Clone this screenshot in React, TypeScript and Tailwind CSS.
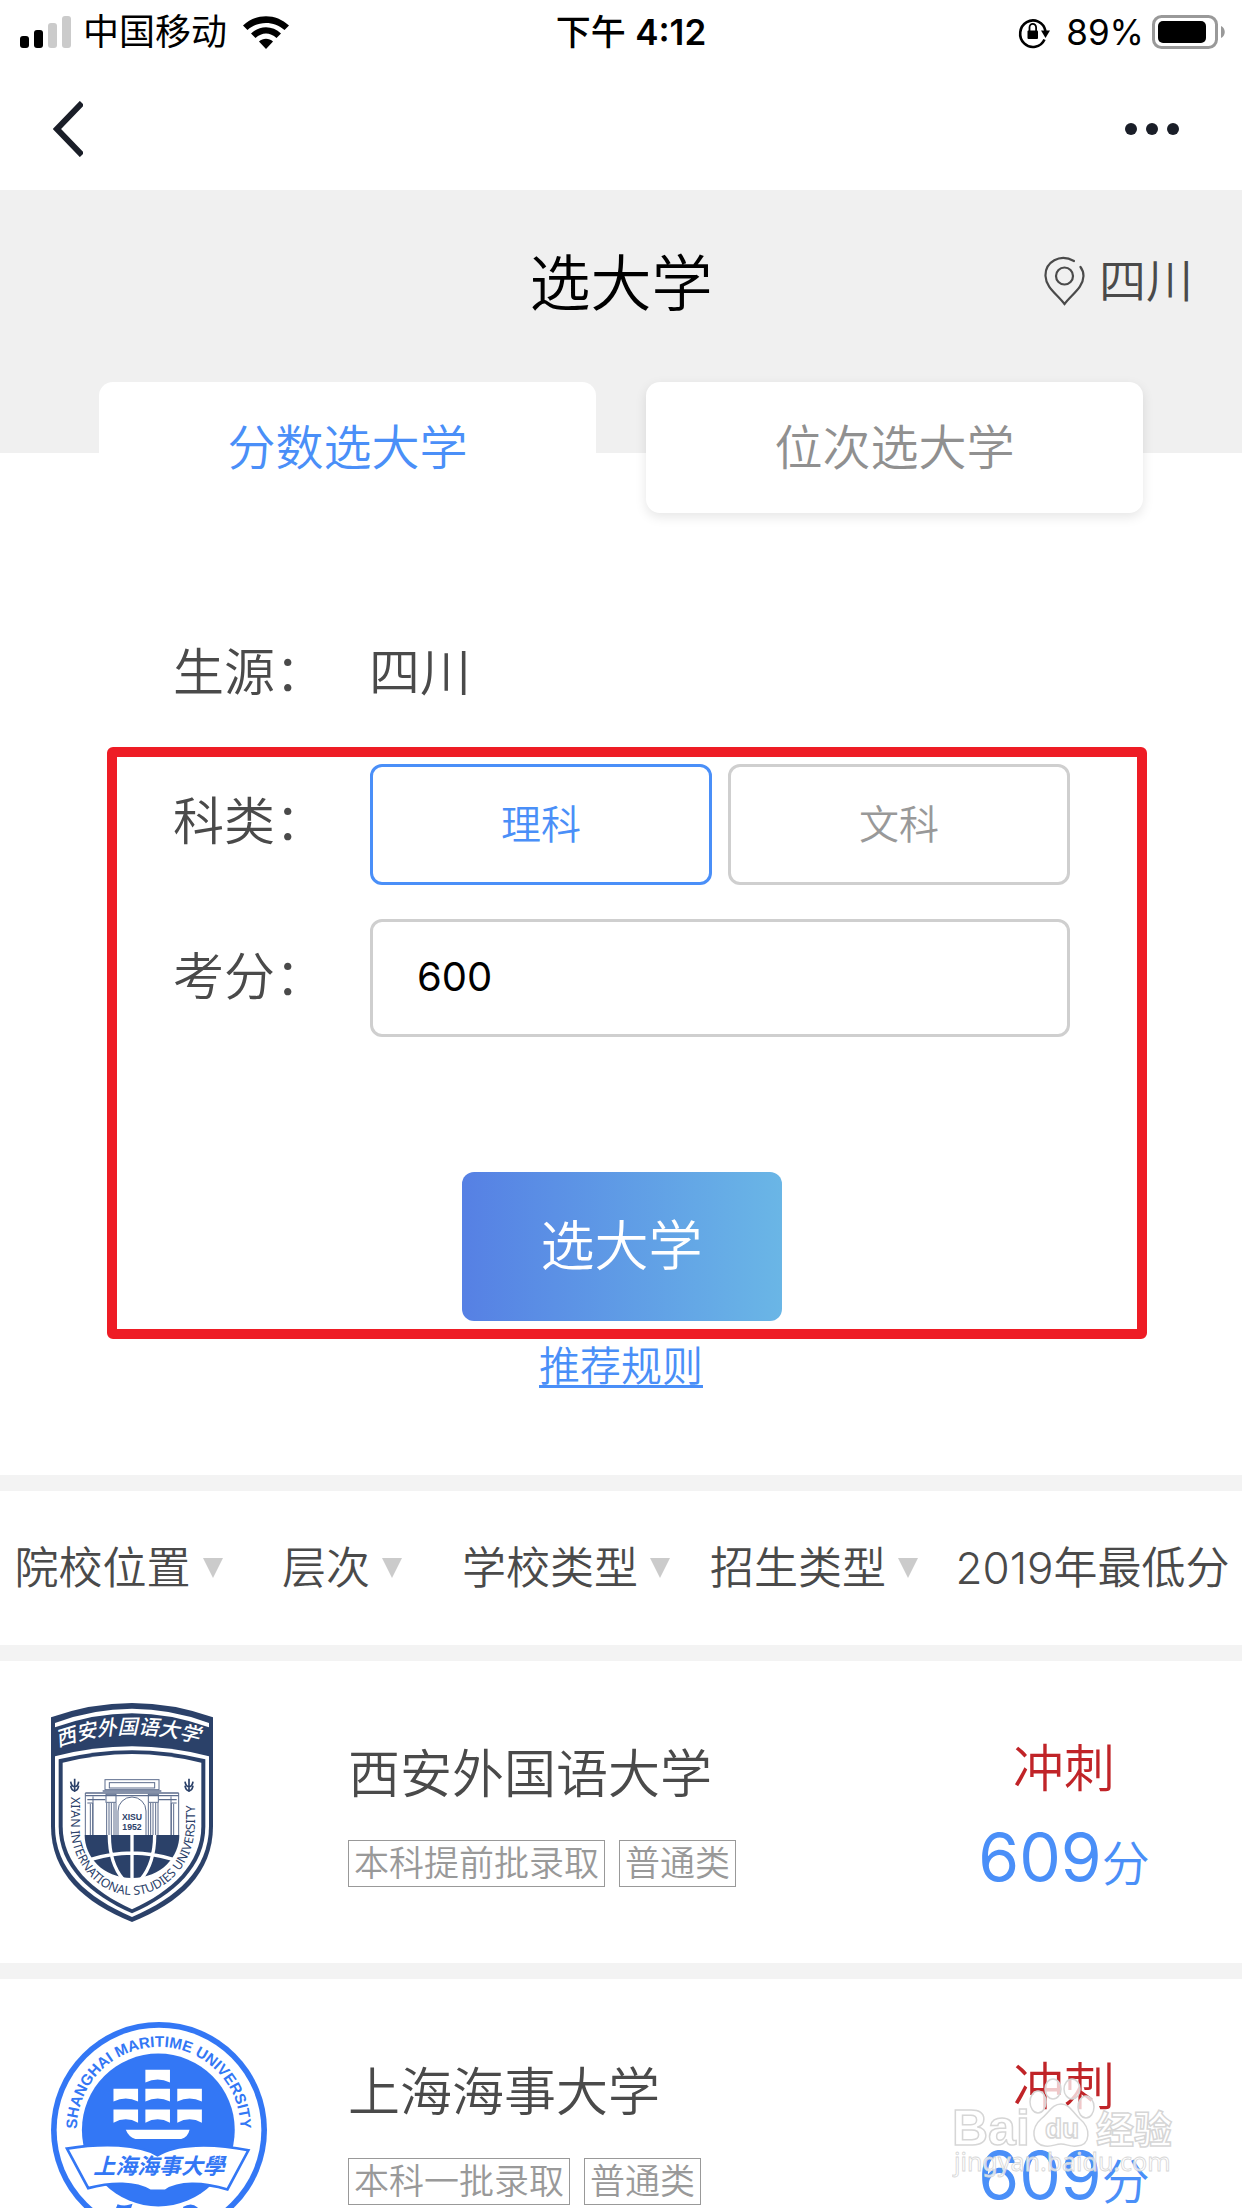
import { useState } from "react";

const filters = ["院校位置", "层次", "学校类型", "招生类型"];

const schools = [
    { name: "西安外国语大学", tags: ["本科提前批录取", "普通类"], level: "冲刺", score: 609, Logo: XisuLogo },
    { name: "上海海事大学", tags: ["本科一批录取", "普通类"], level: "冲刺", score: 609, Logo: SmuLogo },
];

function StatusBar() {
    return (
        <div className="grid h-16 grid-cols-3 items-center pl-5 pr-4 text-black">
            <div className="flex items-center">
                <svg className="h-8 w-[51px]" viewBox="0 0 51 32">
                    <rect x="0" y="20" width="9" height="12" rx="3" />
                    <rect x="14" y="14" width="9" height="18" rx="3" />
                    <rect x="28" y="7" width="9" height="25" rx="3" fill="#cbcbcb" />
                    <rect x="42" y="0" width="9" height="32" rx="3" fill="#cbcbcb" />
                </svg>
                <span className="ml-3 text-[36px] font-normal leading-[60px]">中国移动</span>
                <svg className="ml-4 h-[33px] w-[46px]" viewBox="0 0 46 33">
                    <path d="M0 9.5C13-3 33-3 46 9.5L41.500 14C31 4.500 15 4.500 4.500 14Z" />
                    <path d="M8 17.500C16.500 9 29.500 9 38 17.500L33.500 22C27 16 19 16 12.500 22Z" />
                    <path d="M16 25.500C20 21.800 26 21.800 30 25.500L23 33Z" />
                </svg>
            </div>
            <p className="pl-4 text-center text-[35px] font-medium leading-[60px]">下午 <span className="font-semibold">4:12</span></p>
            <div className="flex items-center justify-end">
                <svg className="h-9 w-8" viewBox="0 0 32 36" fill="none" stroke="#000" strokeWidth="2.600">
                    <path d="M26.500 25.500A12.800 13.300 0 1 1 27.500 17" />
                    <path d="M23 16.500h9L27.500 24Z" fill="#000" stroke="none" />
                    <rect x="9.500" y="16.500" width="10.500" height="8.500" rx="1" fill="#000" stroke="none" />
                    <path d="M11.500 17v-3.500a3.300 3.600 0 0 1 6.600 0V17" strokeWidth="1.800" />
                </svg>
                <span className="ml-4 text-[35px] font-normal leading-[60px]">89%</span>
                <svg className="ml-2 h-[34px] w-[74px]" viewBox="0 0 74 34">
                    <rect x="1.500" y="1.500" width="63" height="31" rx="8" fill="none" stroke="#999" strokeWidth="3" />
                    <rect x="6" y="6" width="48" height="22" rx="5" />
                    <path d="M69 11c5 2 5 10 0 12Z" fill="#999" />
                </svg>
            </div>
        </div>
    );
}

function XisuLogo() {
    return (
        <svg className="h-[219px] w-[162px]" viewBox="63 60 486 657" role="img" aria-label="西安外国语大学">
            <path d="M63 103Q306 17 549 103V430C549 570 450 660 306 717C162 660 63 570 63 430Z" fill="#2b4169" />
            <path d="M75 120Q306 35 537 120V133Q306 48 75 133Z" fill="#fff" />
            <path d="M75 220Q306 160 537 220V430C537 560 440 645 306 702C172 645 75 560 75 430Z" fill="#fff" />
            <path d="M86 229Q306 174 526 229V430C526 550 432 636 306 691C180 636 86 550 86 430Z" fill="#2b4169" />
            <path d="M98 239Q306 187 514 239V430C514 543 425 625 306 679C187 625 98 543 98 430Z" fill="#fff" />

            <path id="xisu-name" d="M84 192Q306 114 534 190" fill="none" />
            <text className="font-['Noto_Sans_CJK_SC',sans-serif] font-medium italic" fill="#fff" fontSize="61">
                <textPath href="#xisu-name">西安外国语大学</textPath>
            </text>

            {/* gate */}
            <g fill="none" stroke="#5d6d8d" strokeWidth="3">
                <rect x="225" y="290" width="162" height="30" />
                <rect x="238" y="299" width="136" height="16" />
                <path d="M218 324h176M166 330h280M166 338h280M172 350h54M386 350h54" strokeWidth="4" />
                <rect x="228" y="334" width="30" height="24" />
                <rect x="355" y="334" width="30" height="24" />
                <path d="M166 330v126M172 360h16v96M181 362v94M189 340v116M446 330v126M440 360h-16v96M431 362v94M423 340v116" />
                <path d="M230 360v96M237 360v96M244 360v96M252 360v96M258 360v96M355 360v96M362 360v96M369 360v96M377 360v96M384 360v96" />
                <path d="M264 456V384a42 42 0 0 1 84 0v72" />
            </g>
            <g className="font-['Liberation_Sans',sans-serif]" fill="#2b4169" fontWeight="bold" fontSize="26" textAnchor="middle">
                <text x="306" y="411">XISU</text>
                <text x="306" y="440">1952</text>
            </g>

            {/* globe */}
            <path d="M164 456H448C448 520 395 585 306 585C217 585 164 520 164 456Z" fill="#2b4169" />
            <path d="M306 456V590M238 456C238 505 246 550 280 590M374 456C374 505 366 550 332 590M180 530Q306 490 432 530" fill="none" stroke="#fff" strokeWidth="10" />

            {/* wheat ears */}
            <path d="M134 287v40M122 296q2 14 12 16q10-2 12-16M122 308q2 14 12 16q10-2 12-16M477 287v40M465 296q2 14 12 16q10-2 12-16M465 308q2 14 12 16q10-2 12-16" fill="none" stroke="#2b4169" strokeWidth="5" />

            <path id="xisu-ring" d="M122 342V430C122 540 205 636 306 636C407 636 494 540 494 430V325" fill="none" />
            <text className="font-['Noto_Sans',sans-serif] font-normal" fill="#2b4169" fontSize="37">
                <textPath href="#xisu-ring">XI'AN INTERNATIONAL STUDIES UNIVERSITY</textPath>
            </text>
        </svg>
    );
}

function SmuLogo() {
    return (
        <svg className="h-[216px] w-[216px]" viewBox="66 94 650 650" role="img" aria-label="上海海事大学">
            <circle cx="391" cy="419" r="325" fill="#3377f5" />
            <circle cx="391" cy="419" r="308" fill="#fff" />
            <circle cx="389" cy="419" r="230" fill="#3377f5" />

            <path id="smu-ring" d="M144 415A246 246 0 0 1 636 415" fill="none" />
            <text className="font-['Liberation_Sans',sans-serif]" fill="#3377f5" fontWeight="bold" fontSize="46" textAnchor="middle">
                <textPath href="#smu-ring" startOffset="50%">SHANGHAI MARITIME UNIVERSITY</textPath>
            </text>

            {/* sails and hull */}
            <g fill="#fff">
                <path d="M350 238h74v38q-37-18-74 0Z" />
                <path d="M254 295h74v38q-37-18-74 0ZM350 295h74v38q-37-18-74 0ZM446 295h74v38q-37-18-74 0Z" />
                <path d="M254 357h74v40q-37-20-74 0ZM350 357h74v40q-37-20-74 0ZM446 357h74v40q-37-20-74 0Z" />
                <path d="M291 418H483Q478 440 458 446H320Q300 440 291 418Z" />
            </g>

            <path d="M114 475C220 458 330 460 387 495C440 460 550 458 660 480L597 598C520 575 450 575 410 602H365C320 575 250 575 178 594Z" fill="#fff" stroke="#3377f5" strokeWidth="8" />
            <text className="font-['Noto_Sans_CJK_SC',sans-serif] italic" x="391" y="552" fill="#3377f5" fontWeight="bold" fontSize="66" textAnchor="middle">上海海事大學</text>
            <path d="M264 648q20 8 38 2l-16 50M466 656q22-14 36 0v34" fill="none" stroke="#3377f5" strokeWidth="12" />
        </svg>
    );
}

function Watermark() {
    return (
        <svg className="absolute bottom-5 right-16 h-[110px] w-[226px]" viewBox="0 0 226 110">
            <g fill="#fff" fillOpacity="0.75" stroke="#d6d6d6" strokeWidth="1.500">
                <ellipse cx="86" cy="24" rx="8" ry="11" />
                <ellipse cx="101" cy="11" rx="8" ry="10" />
                <ellipse cx="120" cy="11" rx="8" ry="10" />
                <ellipse cx="134" cy="29" rx="8" ry="11" />
                <path d="M109 26c9 0 12 9 19 15c11 9 11 26-3 27c-7 1-10-2-16-2s-9 3-16 2c-14-2-14-18-4-27c8-6 11-15 20-15Z" />
                <text className="font-['Liberation_Sans',sans-serif]" x="0" y="67" fontWeight="bold" fontSize="50">Bai</text>
                <text className="font-['Liberation_Sans',sans-serif]" x="93" y="60" fontWeight="bold" fontSize="28">du</text>
                <text className="font-['Noto_Sans_CJK_SC',sans-serif]" x="144" y="65" fontWeight="bold" fontSize="38">经验</text>
            </g>
            <text className="font-['Noto_Sans',sans-serif] font-normal" x="2" y="93" fill="#fff" fillOpacity="0.75" stroke="#d6d6d6" strokeWidth="0.800" fontSize="25">jingyan.baidu.com</text>
        </svg>
    );
}

export default function App() {
    const [tab, setTab] = useState("score");
    const [subject, setSubject] = useState("理科");

    const tabClass = (active: boolean) =>
        active ? "rounded-[14px] bg-white text-[#4a8ff8]" : "rounded-[14px] bg-white text-[#909090] shadow-[0_4px_12px_rgba(0,0,0,0.1)]";
    const subjectClass = (active: boolean) =>
        active ? "border-[#4a8ff8] text-[#4a8ff8]" : "border-[#cfcfcf] text-[#999999]";

    return (
        <div className="relative h-screen overflow-hidden bg-white font-['Inter','Noto_Sans_CJK_SC',sans-serif] font-[350] text-[#4a4a4a]">
            <StatusBar />

            <nav className="flex h-[126px] items-center justify-between pt-1 pl-[53px] pr-[63px]">
                <button aria-label="返回">
                    <svg className="h-14 w-[30px]" viewBox="0 0 30 56" fill="none" stroke="#1a1e28" strokeWidth="6">
                        <path d="M29 2L4 28L29 54" />
                    </svg>
                </button>
                <button aria-label="更多">
                    <svg className="h-3 w-[54px]" viewBox="0 0 54 12" fill="#1a1e28">
                        <circle cx="6" cy="6" r="6" />
                        <circle cx="27" cy="6" r="6" />
                        <circle cx="48" cy="6" r="6" />
                    </svg>
                </button>
            </nav>

            <header className="grid h-[263px] grid-cols-3 items-start bg-[#f0f0f0] pt-[50px]">
                <h1 className="col-start-2 text-center text-[61px] leading-[88px] text-black">选大学</h1>
                <div className="flex items-center justify-end gap-[14px] pr-[49px]">
                    <svg className="h-[50px] w-[41px]" viewBox="0 0 41 50" fill="none" stroke="#4a4a4a" strokeWidth="2.200" strokeLinecap="round">
                        <path d="M30 5C16-3 1 6 1.500 20C2 32 13 38 20.500 48C28 38 39 32 39.500 20C39.500 16 38 13 36.500 11" />
                        <circle cx="20.500" cy="20" r="8.500" />
                    </svg>
                    <span className="text-[47px] leading-[82px]">四川</span>
                </div>
            </header>

            <div className="relative -mt-[71px] grid h-[131px] grid-cols-2 gap-[50px] px-[99px] text-[48px]">
                <button className={tabClass(tab === "score")} onClick={() => setTab("score")}>分数选大学</button>
                <button className={tabClass(tab === "rank")} onClick={() => setTab("rank")}>位次选大学</button>
            </div>

            <form onSubmit={(e) => e.preventDefault()}>
                <div className="mt-[130px] mb-11 flex pl-[173px] text-[51px] leading-[60px]">
                    <span className="w-[196px]">生源：</span>
                    <span>四川</span>
                </div>

                <div className="ml-[107px] mr-[95px] rounded-md border-10 border-[#ee1c25] pt-[7px] pr-[67px] pb-2 pl-14">
                    <div className="flex">
                        <span className="w-[197px] text-[51px] leading-[116px]">科类：</span>
                        <div className="grid h-[121px] flex-1 grid-cols-2 gap-4 text-[40px]">
                            {["理科", "文科"].map((item) => (
                                <button key={item} type="button" onClick={() => setSubject(item)} className={`rounded-xl border-3 ${subjectClass(subject === item)}`}>
                                    {item}
                                </button>
                            ))}
                        </div>
                    </div>
                    <div className="mt-[34px] flex">
                        <label htmlFor="score" className="w-[197px] text-[51px] leading-[116px]">考分：</label>
                        <input id="score" defaultValue="600" className="h-[118px] min-w-0 flex-1 rounded-xl border-3 border-[#cfcfcf] px-11 pb-1 text-[40px] font-normal text-black outline-none" />
                    </div>
                    <button className="mx-auto mt-[135px] block h-[149px] w-80 rounded-xl bg-linear-to-r from-[#5680e4] to-[#6ab6e6] text-[54px] text-white">选大学</button>
                </div>
            </form>

            <div className="pb-[82px] text-center text-[41px] leading-[54px]">
                <a href="#rules" className="text-[#4a8ff8] underline decoration-3 underline-offset-4">推荐规则</a>
            </div>

            <div className="grid h-[186px] grid-cols-[237fr_210fr_238fr_258fr_299fr] items-center justify-items-center border-y-16 border-[#f3f3f3] text-[44px] leading-[64px]">
                {filters.map((item) => (
                    <label key={item} className="flex items-center gap-3">
                        <select aria-label={item} className="appearance-none bg-transparent outline-none">
                            <option>{item}</option>
                        </select>
                        <svg className="h-5 w-5" viewBox="0 0 20 20" fill="#cbcbcb">
                            <path d="M0 0H20L10 20Z" />
                        </svg>
                    </label>
                ))}
                <span>2019年最低分</span>
            </div>

            <ul>
                {schools.map(({ name, tags, level, score, Logo }) => (
                    <li key={name} className="flex h-[318px] items-center border-b-16 border-[#f3f3f3]">
                        <div className="w-[348px] pl-[51px]">
                            <Logo />
                        </div>
                        <div className="flex-1">
                            <h2 className="text-[52px] leading-[75px]">{name}</h2>
                            <div className="mt-7 flex gap-[14px] text-[35px] leading-[45px] text-[#999999]">
                                {tags.map((tag) => (
                                    <span key={tag} className="border border-[#999999] px-[5px]">{tag}</span>
                                ))}
                            </div>
                        </div>
                        <div className="w-[356px] pt-4 text-center">
                            <p className="text-[51px] leading-[64px] text-[#c02428]">{level}</p>
                            <p className="mt-4 text-[48px] leading-[80px] text-[#4a8ff8]">
                                <span className="text-[66px] font-normal">{score}</span>分
                            </p>
                        </div>
                    </li>
                ))}
            </ul>

            <Watermark />
        </div>
    );
}
